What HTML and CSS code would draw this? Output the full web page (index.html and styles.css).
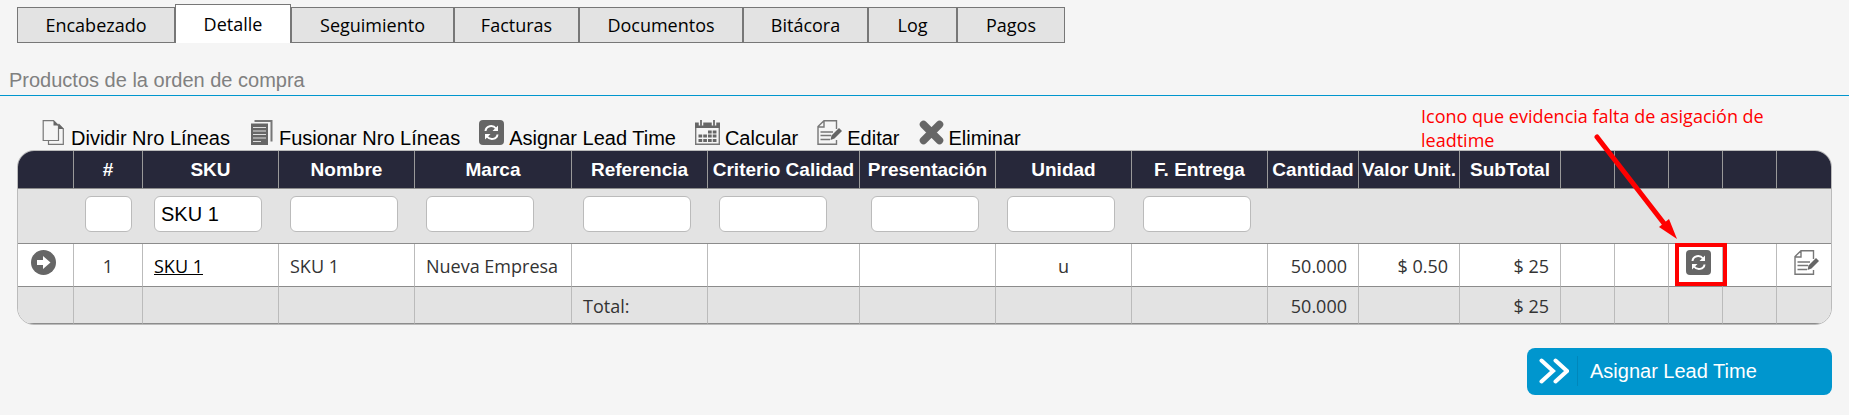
FILE: index.html
```html
<!DOCTYPE html>
<html lang="es">
<head>
  <meta charset="UTF-8">
  <title>Orden de compra</title>
  <link rel="stylesheet" href="styles.css">
</head>
<body>

<!-- Icons -->
<svg class="sprite" aria-hidden="true">
  <symbol id="icon-pages" viewBox="0 0 25 25">
    <path d="M7.500 21V24.400H22.300V9L17.500 4" fill="none" stroke="#777" stroke-width="1.200"/>
    <path d="M2.200 .6H12.500L17.500 5.500V20.500H2.200Z" fill="#f5f5f5" stroke="#777" stroke-width="1.200"/>
    <path d="M12.500 .6V5.500H17.500Z" fill="#666"/>
    <path d="M17.500 4L23 9H17.500Z" fill="#666"/>
  </symbol>
  <symbol id="icon-merge" viewBox="0 0 25 25">
    <path d="M5.500 1H22.500V21.500" fill="none" stroke="#777" stroke-width="2"/>
    <path d="M2 3.500H19V25H2Z" fill="#666"/>
    <path d="M4 7.500H17M4 11H17M4 14.500H17M4 18H17M4 21.500H12" stroke="#ddd" stroke-width="1.200"/>
  </symbol>
  <symbol id="icon-refresh" viewBox="0 0 25 25">
    <rect width="25" height="25" rx="4" fill="#666"/>
    <path d="M6.500 11C7 5.500 14 4.500 17 8.500M18.500 14.500C18 19.500 11 20.500 8 16.500" fill="none" stroke="#fff" stroke-width="2"/>
    <path d="M19 5.500V11H13.500ZM6 19.500V14H11.500Z" fill="#fff"/>
  </symbol>
  <symbol id="icon-calendar" viewBox="0 0 25 25">
    <path d="M.7 3V24.300H24.300V3" fill="#f5f5f5" stroke="#777" stroke-width="1.400"/>
    <path d="M0 2.500H25V8H0Z" fill="#666"/>
    <path d="M6 .5V5.500M19 .5V5.500" stroke="#f5f5f5" stroke-width="4.500"/>
    <path d="M6 0V6M19 0V6" stroke="#777" stroke-width="2"/>
    <path d="M13 12H21.500M3.500 16H21.500M3.500 20.500H21.500" stroke="#666" stroke-width="3" stroke-dasharray="3.700 1.050"/>
  </symbol>
  <symbol id="icon-edit" viewBox="0 0 25 25">
    <path d="M19.500 9V.7H7L1 6.500V24.300H19.500V20M1 7H7V1" fill="none" stroke="#777" stroke-width="1.400"/>
    <path d="M3.500 12H16M3.500 15.500H14M3.500 19.500H13" stroke="#777" stroke-width="1.500"/>
    <path d="M22 8L25 11L17.500 18.500L13.500 20L14.500 15.500Z" fill="#666"/>
  </symbol>
  <symbol id="icon-delete" viewBox="0 0 25 25">
    <path d="M4.500 4.500L20.500 20.500M20.500 4.500L4.500 20.500" stroke="#666" stroke-width="7.500" stroke-linecap="round"/>
  </symbol>
  <symbol id="icon-go" viewBox="0 0 25 25">
    <circle cx="12.500" cy="12.500" r="12.500" fill="#666"/>
    <path d="M6 10H12V6L19.500 12.500L12 19V15H6Z" fill="#fff"/>
  </symbol>
</svg>

<nav class="tabs">
  <button type="button">Encabezado</button>
  <button type="button" class="active">Detalle</button>
  <button type="button">Seguimiento</button>
  <button type="button">Facturas</button>
  <button type="button">Documentos</button>
  <button type="button">Bitácora</button>
  <button type="button">Log</button>
  <button type="button">Pagos</button>
</nav>

<h2>Productos de la orden de compra</h2>

<main class="panel">
  <div class="toolbar">
    <button type="button"><svg class="icon"><use href="#icon-pages"/></svg>Dividir Nro Líneas</button>
    <button type="button"><svg class="icon"><use href="#icon-merge"/></svg>Fusionar Nro Líneas</button>
    <button type="button"><svg class="icon"><use href="#icon-refresh"/></svg>Asignar Lead Time</button>
    <button type="button"><svg class="icon"><use href="#icon-calendar"/></svg>Calcular</button>
    <button type="button"><svg class="icon"><use href="#icon-edit"/></svg>Editar</button>
    <button type="button"><svg class="icon"><use href="#icon-delete"/></svg>Eliminar</button>
  </div>

  <div class="grid">
    <table>
      <colgroup>
        <col class="w-go"><col class="w-num"><col class="w-text"><col class="w-text"><col class="w-brand">
        <col class="w-text"><col class="w-quality"><col class="w-text"><col class="w-text"><col class="w-text">
        <col class="w-qty"><col class="w-money"><col class="w-money">
        <col class="w-action"><col class="w-action"><col class="w-action"><col class="w-action"><col class="w-action">
      </colgroup>
      <thead>
        <tr>
          <th></th>
          <th>#</th>
          <th>SKU</th>
          <th>Nombre</th>
          <th>Marca</th>
          <th>Referencia</th>
          <th>Criterio Calidad</th>
          <th>Presentación</th>
          <th>Unidad</th>
          <th>F. Entrega</th>
          <th>Cantidad</th>
          <th>Valor Unit.</th>
          <th>SubTotal</th>
          <th></th>
          <th></th>
          <th></th>
          <th></th>
          <th></th>
        </tr>
      </thead>
      <tbody>
        <tr class="filters">
          <td></td>
          <td><input type="text" aria-label="#"></td>
          <td><input type="text" aria-label="SKU" value="SKU 1"></td>
          <td><input type="text" aria-label="Nombre"></td>
          <td><input type="text" aria-label="Marca"></td>
          <td><input type="text" aria-label="Referencia"></td>
          <td><input type="text" aria-label="Criterio Calidad"></td>
          <td><input type="text" aria-label="Presentación"></td>
          <td><input type="text" aria-label="Unidad"></td>
          <td><input type="text" aria-label="F. Entrega"></td>
          <td colspan="8"></td>
        </tr>
        <tr class="item">
          <td class="action go"><button type="button" aria-label="Ver"><svg class="icon"><use href="#icon-go"/></svg></button></td>
          <td class="center">1</td>
          <td><a href="#">SKU 1</a></td>
          <td>SKU 1</td>
          <td>Nueva Empresa</td>
          <td></td>
          <td></td>
          <td></td>
          <td class="center">u</td>
          <td></td>
          <td class="number">50.000</td>
          <td class="number">$ 0.50</td>
          <td class="number">$ 25</td>
          <td></td>
          <td></td>
          <td class="action"><button type="button" aria-label="Asignar Lead Time"><svg class="icon"><use href="#icon-refresh"/></svg></button></td>
          <td></td>
          <td class="action"><button type="button" aria-label="Editar"><svg class="icon"><use href="#icon-edit"/></svg></button></td>
        </tr>
      </tbody>
      <tfoot>
        <tr>
          <td></td>
          <td></td>
          <td></td>
          <td></td>
          <td></td>
          <td>Total:</td>
          <td></td>
          <td></td>
          <td></td>
          <td></td>
          <td class="number">50.000</td>
          <td></td>
          <td class="number">$ 25</td>
          <td></td>
          <td></td>
          <td></td>
          <td></td>
          <td></td>
        </tr>
      </tfoot>
    </table>
  </div>

  <div class="footer">
    <button type="button" class="primary">
      <svg viewBox="0 0 30 26"><path d="M2.500 2.500L14 13L2.500 23.500M16.500 2.500L28 13L16.500 23.500"/></svg>
      <span>Asignar Lead Time</span>
    </button>
  </div>

  <!-- Note over the table -->
  <div class="note">
    <p>Icono que evidencia falta de asigación de leadtime</p>
    <svg class="arrow" viewBox="0 0 84 108">
      <path d="M3 3L72 92" stroke="red" stroke-width="5" stroke-linecap="round"/>
      <path d="M65 93L75 85L83 105Z" fill="red"/>
    </svg>
    <div class="mark"></div>
  </div>
</main>

</body>
</html>
```

FILE: styles.css
```css
* {
  box-sizing: border-box;
}
body {
  margin: 0;
  padding-top: 4px;
  background: #f5f5f5;
  color: #000;
  font-family: "Liberation Sans", Arial, sans-serif;
  font-size: 20px;
}
button {
  font: inherit;
  color: inherit;
  border: none;
  background: none;
  padding: 0;
  cursor: pointer;
}
.sprite {
  display: none;
}
.icon {
  width: 25px;
  height: 25px;
}

/* Tabs */
.tabs {
  display: grid;
  grid-template-columns: 158px 116px 163px 125px 164px 125px 89px 108px;
  align-items: end;
  padding-left: 17px;
}
.tabs button {
  height: 36px;
  border: 1px solid #777;
  background: #e3e3e3;
  font-family: "Open Sans", "Segoe UI", sans-serif;
  font-size: 18px;
}
.tabs .active {
  height: 39px;
  background: #fff;
  border-bottom: none;
}

h2 {
  margin: 25px 0 0;
  padding: 0 9px 3px;
  border-bottom: 1px solid #0096ce;
  color: #808080;
  font-size: 20px;
  font-weight: normal;
  line-height: 24px;
}

.panel {
  position: relative;
  padding: 24px 17px 20px;
}

/* Toolbar */
.toolbar {
  display: flex;
  gap: 19px;
  padding-left: 24px;
}
.toolbar button {
  display: flex;
  align-items: baseline;
  gap: 5px;
  line-height: 24px;
  white-space: nowrap;
}

/* Products table */
.grid {
  border: 1px solid #bbb;
  border-radius: 17px;
  overflow: hidden;
}
table {
  width: 100%;
  table-layout: fixed;
  border-collapse: separate;
  border-spacing: 0;
}
.w-go { width: 56px; }
.w-num { width: 69px; }
.w-text { width: 136px; }
.w-brand { width: 157px; }
.w-quality { width: 152px; }
.w-qty { width: 91px; }
.w-money { width: 101px; }
.w-action { width: 54px; }
th, td {
  border-right: 1px solid #bbb;
  border-bottom: 1px solid #8c8c8c;
  white-space: nowrap;
}
th:last-child, td:last-child {
  border-right: none;
}
th {
  height: 38px;
  padding: 0;
  background: #27283a;
  color: #fff;
  border-right-color: #999;
  font-size: 19px;
}
td {
  padding: 0 11px;
  background: #e3e3e3;
  color: #333;
  font-family: "Open Sans", "Segoe UI", sans-serif;
  font-size: 18px;
}
.filters td {
  height: 55px;
  padding: 7px 11px 11px;
  border-right: none;
}
.filters input {
  display: block;
  width: 100%;
  max-width: 108px;
  height: 36px;
  padding: 0 6px;
  border: 1px solid #bbb;
  border-radius: 6px;
  background: #fff;
  color: #000;
  font-family: "Liberation Sans", Arial, sans-serif;
  font-size: 20px;
}
.item td {
  height: 43px;
  padding-top: 2px;
  background: #fff;
}
.item .action {
  padding: 6px 0 0 17px;
  vertical-align: top;
}
.item .go {
  padding-left: 13px;
}
.item .icon {
  display: block;
}
.item a {
  color: #000;
}
tfoot td {
  height: 37px;
  padding-top: 2px;
}
.center {
  text-align: center;
}
.number {
  text-align: right;
}

/* Bottom button */
.footer {
  display: flex;
  justify-content: flex-end;
  margin-top: 23px;
}
.primary {
  display: flex;
  align-items: center;
  width: 305px;
  height: 47px;
  padding: 0 0 2px 12px;
  border-radius: 8px;
  background: #0096ce;
  color: #fff;
}
.primary svg {
  width: 30px;
  height: 26px;
  fill: none;
  stroke: #fff;
  stroke-width: 4;
  stroke-linecap: round;
}
.primary span {
  margin-left: 8px;
  padding-left: 12px;
  border-left: 1px solid #0087bb;
  line-height: 30px;
}

/* Note */
.note {
  position: absolute;
  top: 8px;
  right: 68px;
  width: 360px;
  color: red;
  pointer-events: none;
}
.note p {
  margin: 0;
  font-family: "Open Sans", "Segoe UI", sans-serif;
  font-size: 18px;
  line-height: 24px;
}
.note .arrow {
  position: absolute;
  top: 30px;
  right: 103px;
  width: 84px;
  height: 108px;
}
.note .mark {
  position: absolute;
  top: 139px;
  right: 54px;
  width: 52px;
  height: 43px;
  border: 4px solid red;
}
```
